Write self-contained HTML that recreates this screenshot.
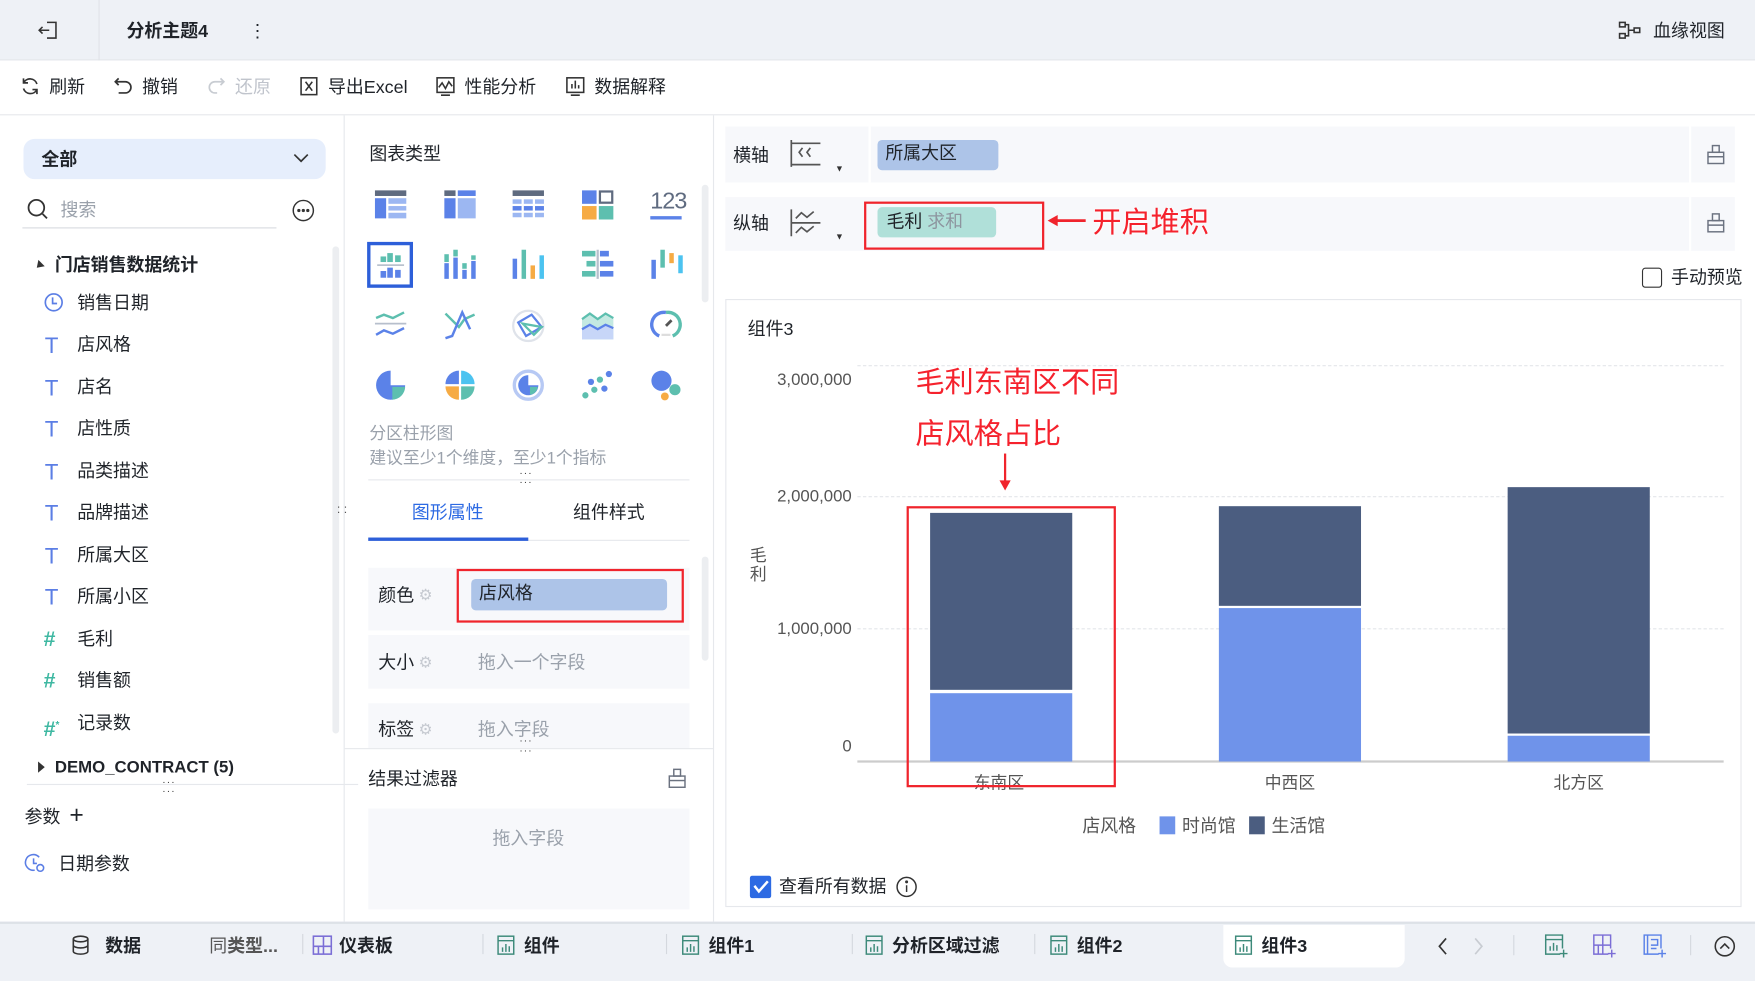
<!DOCTYPE html>
<html><head><meta charset="utf-8">
<style>
*{margin:0;padding:0;box-sizing:border-box}
html,body{width:1755px;height:981px;overflow:hidden;background:#fff}
body{font-family:"Liberation Sans","Noto Sans CJK SC",sans-serif;color:#1f2329}
#w{position:absolute;left:0;top:0;width:1568px;height:876px;transform:scale(1.11926,1.11986);transform-origin:0 0;background:#fff}
.a{position:absolute;white-space:nowrap}
.t{font-size:16px;line-height:24px}
.g{color:#9aa1ab}
.b{font-weight:bold}
.red{color:#f5222d}
svg{position:absolute;overflow:visible}
</style></head><body><div id="w">

<!-- top bar -->
<div class="a" style="left:0;top:0;width:1568px;height:54px;background:#eef1f6;border-bottom:1px solid #e3e6eb"></div>
<div class="a" style="left:88px;top:0;width:1px;height:54px;background:#e0e3e8"></div>
<svg style="left:34px;top:18px" width="18" height="18" viewBox="0 0 18 18" fill="none" stroke="#333" stroke-width="1.4"><path d="M8 2h8v14H8M1 9h9M4 6l-3 3 3 3"/></svg>
<div class="a t b" style="left:113px;top:17px">分析主题4</div>
<div class="a t" style="left:222px;top:17px">⋮</div>
<svg style="left:1446px;top:19px" width="20" height="16" viewBox="0 0 20 16" fill="none" stroke="#333" stroke-width="1.4"><rect x="1" y="1" width="5" height="4"/><rect x="1" y="11" width="5" height="4"/><rect x="14" y="6" width="5" height="4"/><path d="M6 3h3v10H6M9 8h5"/></svg>
<div class="a t" style="left:1477px;top:17px">血缘视图</div>

<!-- toolbar -->
<div class="a" style="left:0;top:102px;width:1568px;height:1px;background:#e6e8ec"></div>
<svg style="left:18px;top:68px" width="18" height="18" viewBox="0 0 18 18" fill="none" stroke="#333" stroke-width="1.5"><path d="M15 7A6.5 6.5 0 0 0 3 6M3 11a6.5 6.5 0 0 0 12 1M3 2v4h4M15 16v-4h-4"/></svg>
<div class="a t" style="left:44px;top:67px">刷新</div>
<svg style="left:101px;top:68px" width="18" height="18" viewBox="0 0 18 18" fill="none" stroke="#333" stroke-width="1.5"><path d="M5 2L2 5l3 3M2 5h9a5 5 0 0 1 0 10H5"/></svg>
<div class="a t" style="left:127px;top:67px">撤销</div>
<svg style="left:184px;top:68px" width="18" height="18" viewBox="0 0 18 18" fill="none" stroke="#c8ccd2" stroke-width="1.5"><path d="M13 2l3 3-3 3M16 5H8a5 5 0 0 0 0 10h2"/></svg>
<div class="a t" style="left:210px;top:67px;color:#c0c4cc">还原</div>
<svg style="left:267px;top:68px" width="18" height="18" viewBox="0 0 18 18" fill="none" stroke="#333" stroke-width="1.4"><rect x="2" y="1.5" width="14" height="15"/><path d="M6 5l6 8M12 5l-6 8"/></svg>
<div class="a t" style="left:293px;top:67px">导出Excel</div>
<svg style="left:389px;top:68px" width="18" height="18" viewBox="0 0 18 18" fill="none" stroke="#333" stroke-width="1.4"><rect x="1.5" y="1.5" width="15" height="13"/><path d="M3 10l3-4 3 5 3-6 3 4M5 17h8"/></svg>
<div class="a t" style="left:415px;top:67px">性能分析</div>
<svg style="left:505px;top:68px" width="18" height="18" viewBox="0 0 18 18" fill="none" stroke="#333" stroke-width="1.4"><rect x="1.5" y="1.5" width="15" height="13"/><path d="M6 11V7M9 11V4M12 11V8M5 17h8"/></svg>
<div class="a t" style="left:531px;top:67px">数据解释</div>

<!-- left panel -->
<div class="a" style="left:307px;top:103px;width:1px;height:720px;background:#e6e8ec"></div>
<div class="a" style="left:21px;top:124px;width:270px;height:36px;background:#e6eefc;border-radius:10px"></div>
<div class="a t b" style="left:37px;top:132px">全部</div>
<svg style="left:262px;top:137px" width="14" height="9" viewBox="0 0 14 9" fill="none" stroke="#333" stroke-width="1.5"><path d="M1 1l6 6 6-6"/></svg>
<svg style="left:24px;top:177px" width="20" height="20" viewBox="0 0 20 20" fill="none" stroke="#333" stroke-width="1.6"><circle cx="8.5" cy="8.5" r="7"/><path d="M14 14l4 4"/></svg>
<div class="a t g" style="left:54px;top:177px">搜索</div>
<div class="a" style="left:20px;top:203px;width:227px;height:1px;background:#d8dbe0"></div>
<svg style="left:261px;top:178px" width="20" height="20" viewBox="0 0 20 20" fill="none" stroke="#333" stroke-width="1.3"><circle cx="10" cy="10" r="9"/><circle cx="6" cy="10" r=".8" fill="#333"/><circle cx="10" cy="10" r=".8" fill="#333"/><circle cx="14" cy="10" r=".8" fill="#333"/></svg>
<div class="a" style="left:297px;top:220px;width:6px;height:435px;background:#eceef1;border-radius:3px"></div>
<div class="a" style="left:32px;top:233px;width:0;height:0;border-top:4px solid transparent;border-bottom:4px solid transparent;border-right:6px solid #333;transform:rotate(-45deg)"></div>
<div class="a t b" style="left:49px;top:226px">门店销售数据统计</div>

<svg style="left:39px;top:261px" width="18" height="18" viewBox="0 0 18 18" fill="none" stroke="#5b7ee5" stroke-width="1.5"><circle cx="9" cy="9" r="7.5"/><path d="M8 4.5V10h4"/></svg>
<div class="a t" style="left:69px;top:260px">销售日期</div>
<div class="a t" style="left:40px;top:297px;color:#5b7ee5;font-size:20px">T</div><div class="a t" style="left:69px;top:297px">店风格</div>
<div class="a t" style="left:40px;top:335px;color:#5b7ee5;font-size:20px">T</div><div class="a t" style="left:69px;top:335px">店名</div>
<div class="a t" style="left:40px;top:372px;color:#5b7ee5;font-size:20px">T</div><div class="a t" style="left:69px;top:372px">店性质</div>
<div class="a t" style="left:40px;top:410px;color:#5b7ee5;font-size:20px">T</div><div class="a t" style="left:69px;top:410px">品类描述</div>
<div class="a t" style="left:40px;top:447px;color:#5b7ee5;font-size:20px">T</div><div class="a t" style="left:69px;top:447px">品牌描述</div>
<div class="a t" style="left:40px;top:485px;color:#5b7ee5;font-size:20px">T</div><div class="a t" style="left:69px;top:485px">所属大区</div>
<div class="a t" style="left:40px;top:522px;color:#5b7ee5;font-size:20px">T</div><div class="a t" style="left:69px;top:522px">所属小区</div>
<div class="a t b" style="left:39px;top:560px;color:#3fb8a2;font-size:19px">#</div><div class="a t" style="left:69px;top:560px">毛利</div>
<div class="a t b" style="left:39px;top:597px;color:#3fb8a2;font-size:19px">#</div><div class="a t" style="left:69px;top:597px">销售额</div>
<div class="a t b" style="left:39px;top:635px;color:#3fb8a2;font-size:19px">#<sup style="font-size:9px">*</sup></div><div class="a t" style="left:69px;top:635px">记录数</div>
<div class="a" style="left:34px;top:680px;width:0;height:0;border-top:5px solid transparent;border-bottom:5px solid transparent;border-left:6px solid #333"></div>
<div class="a t b" style="left:49px;top:674px;font-size:15px">DEMO_CONTRACT (5)</div>
<div class="a" style="left:24px;top:700px;width:296px;height:1px;background:#e6e8ec"></div>
<div class="a" style="left:145px;top:693px;font-size:9px;color:#333;letter-spacing:1px">···</div>
<div class="a" style="left:145px;top:701px;font-size:9px;color:#333;letter-spacing:1px">···</div>
<div class="a t" style="left:22px;top:719px">参数</div>
<div class="a t" style="left:62px;top:716px;font-size:22px">+</div>
<svg style="left:23px;top:762px" width="18" height="18" viewBox="0 0 18 18" fill="none" stroke="#5b7ee5" stroke-width="1.4"><path d="M12 3.5A7 7 0 1 0 8 15"/><path d="M7 4.5V9h3"/><circle cx="13" cy="13" r="3"/></svg>
<div class="a t" style="left:52px;top:761px">日期参数</div>
<div class="a" style="left:301px;top:452px;font-size:11px;color:#555;line-height:6px">: :</div>

<!-- middle panel -->
<div class="a" style="left:637px;top:103px;width:1px;height:720px;background:#e6e8ec"></div>
<div class="a t" style="left:330px;top:127px">图表类型</div>
<div class="a" style="left:627px;top:165px;width:6px;height:105px;background:#eceef1;border-radius:3px"></div>
<!-- row1 -->
<svg style="left:335px;top:170px" width="28" height="26" viewBox="0 0 28 26"><rect x="0" y="0" width="28" height="5" fill="#5f6b80"/><rect x="0" y="7" width="10" height="18" fill="#5b82e8"/><rect x="12" y="7" width="16" height="5" fill="#9cb7f2"/><rect x="12" y="14" width="16" height="4" fill="#9cb7f2"/><rect x="12" y="20" width="16" height="5" fill="#9cb7f2"/></svg>
<svg style="left:397px;top:170px" width="28" height="26" viewBox="0 0 28 26"><rect x="0" y="0" width="10" height="5" fill="#5f6b80"/><rect x="12" y="0" width="16" height="5" fill="#5b82e8"/><rect x="0" y="7" width="10" height="18" fill="#5b82e8"/><rect x="12" y="7" width="16" height="18" fill="#9cb7f2"/></svg>
<svg style="left:458px;top:170px" width="28" height="26" viewBox="0 0 28 26"><rect x="0" y="0" width="28" height="5" fill="#5f6b80"/><g fill="#9cb7f2"><rect x="0" y="8" width="8" height="4"/><rect x="10" y="8" width="8" height="4"/><rect x="20" y="8" width="8" height="4"/><rect x="0" y="20" width="8" height="4"/><rect x="10" y="20" width="8" height="4"/><rect x="20" y="20" width="8" height="4"/></g><g fill="#5b82e8"><rect x="0" y="14" width="8" height="4"/><rect x="10" y="14" width="8" height="4"/><rect x="20" y="14" width="8" height="4"/></g></svg>
<svg style="left:520px;top:170px" width="28" height="26" viewBox="0 0 28 26"><rect x="0" y="0" width="13" height="12" fill="#5b82e8"/><rect x="16" y="1" width="11" height="10" fill="none" stroke="#5f6b80" stroke-width="2"/><rect x="0" y="14" width="13" height="12" fill="#f6ab44"/><rect x="15" y="14" width="13" height="12" fill="#5dbfaf"/></svg>
<div class="a" style="left:581px;top:169px;font-size:21px;color:#5f6b80;line-height:22px;letter-spacing:-1px">123</div>
<div class="a" style="left:581px;top:193px;width:28px;height:3px;background:#5b82e8"></div>
<!-- row2 -->
<div class="a" style="left:328px;top:216px;width:41px;height:41px;border:3px solid #2d5fd9"></div>
<svg style="left:337px;top:225px" width="24" height="24" viewBox="0 0 24 24"><g fill="#5dbfaf"><rect x="3" y="4" width="5" height="5"/><rect x="9" y="1" width="5" height="8"/><rect x="16" y="3" width="5" height="6"/></g><rect x="0" y="11" width="24" height="1.5" fill="#b7bfcc"/><g fill="#5b82e8"><rect x="3" y="17" width="5" height="6"/><rect x="9" y="14" width="5" height="9"/><rect x="16" y="16" width="5" height="7"/></g></svg>
<svg style="left:397px;top:223px" width="28" height="26" viewBox="0 0 28 26"><g fill="#5b82e8"><rect x="0" y="12" width="4" height="14"/><rect x="8" y="7" width="4" height="19"/><rect x="16" y="18" width="4" height="8"/><rect x="24" y="10" width="4" height="16"/></g><g fill="#5dbfaf"><rect x="0" y="4" width="4" height="7"/><rect x="8" y="0" width="4" height="6"/><rect x="16" y="12" width="4" height="5"/><rect x="24" y="5" width="4" height="4"/></g></svg>
<svg style="left:458px;top:223px" width="28" height="26" viewBox="0 0 28 26"><rect x="0" y="8" width="4" height="18" fill="#5b82e8"/><rect x="8" y="0" width="4" height="26" fill="#5dbfaf"/><rect x="16" y="14" width="4" height="12" fill="#f6ab44"/><rect x="24" y="5" width="4" height="21" fill="#4cc3f0"/></svg>
<svg style="left:520px;top:223px" width="28" height="26" viewBox="0 0 28 26"><rect x="13" y="0" width="2" height="26" fill="#b7bfcc"/><g fill="#5dbfaf"><rect x="0" y="1" width="12" height="5"/><rect x="4" y="10" width="8" height="5"/><rect x="0" y="19" width="12" height="5"/></g><g fill="#5b82e8"><rect x="16" y="1" width="8" height="5"/><rect x="16" y="10" width="12" height="5"/><rect x="16" y="19" width="12" height="5"/></g></svg>
<svg style="left:582px;top:223px" width="28" height="26" viewBox="0 0 28 26"><rect x="0" y="9" width="4" height="17" fill="#5b82e8"/><rect x="8" y="0" width="4" height="16" fill="#5dbfaf"/><rect x="16" y="3" width="4" height="9" fill="#f6ab44"/><rect x="24" y="5" width="4" height="16" fill="#4cc3f0"/></svg>
<!-- row3 -->
<svg style="left:335px;top:277px" width="28" height="26" viewBox="0 0 28 26" fill="none" stroke-width="2.2"><path d="M1 7l7-3 8 3 10-5" stroke="#5dbfaf"/><path d="M0 12h28" stroke="#b7bfcc" stroke-width="1.5"/><path d="M1 22l7-4 8 3 10-5" stroke="#5b82e8"/></svg>
<svg style="left:397px;top:277px" width="28" height="26" viewBox="0 0 28 26" fill="none" stroke-width="2.2"><path d="M1 3l12 12 5-7 9-4" stroke="#5dbfaf"/><path d="M1 25l6-2 9-21 7 15" stroke="#5b82e8"/></svg>
<svg style="left:457px;top:276px" width="30" height="30" viewBox="0 0 30 30" fill="none"><circle cx="15" cy="15" r="13.5" stroke="#dfe3ea" stroke-width="2"/><path d="M6 12l12-7 9 11-14 8z" stroke="#5b82e8" stroke-width="2"/><path d="M10 13l17 3-7 7z" stroke="#5dbfaf" stroke-width="2"/></svg>
<svg style="left:520px;top:277px" width="28" height="26" viewBox="0 0 28 26"><path d="M0 8l7-5 7 5 7-5 7 4v19H0z" fill="#c4e9e2"/><path d="M0 8l7-5 7 5 7-5 7 4" stroke="#5dbfaf" stroke-width="2" fill="none"/><path d="M0 17l7-4 7 4 7-4 7 3v10H0z" fill="#c7d6f8"/><path d="M0 17l7-4 7 4 7-4 7 3" stroke="#5b82e8" stroke-width="2" fill="none"/></svg>
<svg style="left:581px;top:276px" width="28" height="28" viewBox="0 0 28 28" fill="none" stroke-width="3"><path d="M8 24A11 11 0 0 1 14 3" stroke="#5b82e8"/><path d="M14 3A11 11 0 0 1 20 24" stroke="#5dbfaf"/><path d="M14 15l5-5" stroke="#555" stroke-width="2.5"/><path d="M10 23h8" stroke="#ddd" stroke-width="2"/></svg>
<!-- row4 -->
<svg style="left:335px;top:330px" width="28" height="28" viewBox="0 0 28 28"><path d="M14 14V1A13 13 0 1 0 27 14z" fill="#5b82e8"/><path d="M15.5 15.5h11.5A12 12 0 0 1 15.5 27z" fill="#5dbfaf"/></svg>
<svg style="left:397px;top:330px" width="28" height="28" viewBox="0 0 28 28"><path d="M13 13V1A12 12 0 0 0 1 13z" fill="#5b82e8"/><path d="M15 13V1A12 12 0 0 1 27 13z" fill="#4cc3f0"/><path d="M13 15H1A12 12 0 0 0 13 27z" fill="#f6ab44"/><path d="M15 15h12A12 12 0 0 1 15 27z" fill="#5dbfaf"/></svg>
<svg style="left:458px;top:330px" width="28" height="28" viewBox="0 0 28 28" fill="none"><circle cx="14" cy="14" r="12.5" stroke="#b7c9f4" stroke-width="3"/><path d="M14 14V5a9 9 0 1 0 9 9z" fill="#5b82e8"/><path d="M15.5 15.5h7a8 8 0 0 1-7 7z" fill="#5dbfaf"/></svg>
<svg style="left:520px;top:331px" width="28" height="26" viewBox="0 0 28 26"><g fill="#5b82e8"><circle cx="24" cy="3" r="2.8"/><circle cx="8" cy="10" r="2.8"/><circle cx="20" cy="16" r="2.8"/></g><g fill="#5dbfaf"><circle cx="16" cy="8" r="2.8"/><circle cx="11" cy="17" r="2.8"/><circle cx="3" cy="22" r="2.8"/></g></svg>
<svg style="left:581px;top:330px" width="28" height="28" viewBox="0 0 28 28"><circle cx="10" cy="10" r="9" fill="#5b82e8"/><circle cx="22" cy="18" r="5" fill="#5dbfaf"/><circle cx="13" cy="24" r="3.5" fill="#f6ab44"/></svg>
<div class="a t g" style="left:330px;top:376px;font-size:15px">分区柱形图</div>
<div class="a t g" style="left:330px;top:398px;font-size:15px">建议至少1个维度，至少1个指标</div>
<div class="a" style="left:329px;top:428px;width:287px;height:1px;background:#e6e8ec"></div>
<div class="a" style="left:464px;top:417px;font-size:9px;color:#333;letter-spacing:1px">···</div>
<div class="a" style="left:464px;top:425px;font-size:9px;color:#333;letter-spacing:1px">···</div>
<div class="a t" style="left:368px;top:447px;color:#2d6ae3">图形属性</div>
<div class="a t" style="left:512px;top:447px">组件样式</div>
<div class="a" style="left:329px;top:482px;width:287px;height:1px;background:#e6e8ec"></div>
<div class="a" style="left:329px;top:480px;width:143px;height:3px;background:#2d5fd9"></div>
<div class="a" style="left:627px;top:497px;width:6px;height:93px;background:#eceef1;border-radius:3px"></div>
<div class="a" style="left:329px;top:507px;width:287px;height:56px;background:#f7f8fb"></div>
<div class="a t" style="left:338px;top:521px">颜色</div><div class="a" style="left:374px;top:523px;color:#c5c9d0;font-size:14px">⚙</div>
<div class="a" style="left:421px;top:517px;width:175px;height:28px;background:#adc4e8;border-radius:4px"></div>
<div class="a t" style="left:428px;top:519px">店风格</div>
<div class="a" style="left:408px;top:508px;width:203px;height:48px;border:2px solid #f0242c"></div>
<div class="a" style="left:329px;top:567px;width:287px;height:48px;background:#f7f8fb"></div>
<div class="a t" style="left:338px;top:581px">大小</div><div class="a" style="left:374px;top:583px;color:#c5c9d0;font-size:14px">⚙</div>
<div class="a t g" style="left:427px;top:581px">拖入一个字段</div>
<div class="a" style="left:329px;top:628px;width:287px;height:40px;background:#f7f8fb"></div>
<div class="a t" style="left:338px;top:641px">标签</div><div class="a" style="left:374px;top:643px;color:#c5c9d0;font-size:14px">⚙</div>
<div class="a t g" style="left:427px;top:641px">拖入字段</div>
<div class="a" style="left:308px;top:668px;width:329px;height:1px;background:#e6e8ec"></div>
<div class="a" style="left:464px;top:656px;font-size:9px;color:#333;letter-spacing:1px">···</div>
<div class="a" style="left:464px;top:665px;font-size:9px;color:#333;letter-spacing:1px">···</div>
<div class="a t" style="left:329px;top:685px">结果过滤器</div>
<svg style="left:597px;top:686px" width="16" height="18" viewBox="0 0 16 18" fill="none" stroke="#6b7280" stroke-width="1.3"><rect x="1" y="7" width="14" height="10"/><rect x="5" y="1" width="6" height="6"/><path d="M1 11h14"/></svg>
<div class="a" style="left:329px;top:722px;width:287px;height:90px;background:#f7f8fb"></div>
<div class="a t g" style="left:440px;top:738px">拖入字段</div>

<!-- right panel axes -->
<div class="a" style="left:648px;top:113px;width:902px;height:50px;background:#f7f8fb"></div>
<div class="a" style="left:776px;top:113px;width:2px;height:50px;background:#fff"></div>
<div class="a" style="left:1509px;top:113px;width:2px;height:50px;background:#fff"></div>
<div class="a t" style="left:655px;top:128px">横轴</div>
<svg style="left:705px;top:124px" width="28" height="26" viewBox="0 0 28 26" fill="none" stroke="#555" stroke-width="1.5"><path d="M2 1v24M2 4h26M2 23h26M12 8l-3 4 3 4M19 8l-3 4 3 4"/></svg>
<div class="a" style="left:746px;top:146px;font-size:8px;color:#333">▼</div>
<div class="a" style="left:784px;top:125px;width:108px;height:27px;background:#adc4e8;border-radius:4px"></div>
<div class="a t" style="left:791px;top:126px">所属大区</div>
<svg style="left:1525px;top:129px" width="16" height="18" viewBox="0 0 16 18" fill="none" stroke="#6b7280" stroke-width="1.3"><rect x="1" y="7" width="14" height="10"/><rect x="5" y="1" width="6" height="6"/><path d="M1 11h14"/></svg>

<div class="a" style="left:648px;top:176px;width:902px;height:48px;background:#f7f8fb"></div>
<div class="a" style="left:1509px;top:176px;width:2px;height:48px;background:#fff"></div>
<div class="a t" style="left:655px;top:189px">纵轴</div>
<svg style="left:705px;top:186px" width="28" height="26" viewBox="0 0 28 26" fill="none" stroke="#555" stroke-width="1.5"><path d="M2 1v24M2 13h26M6 9l5-5 5 4 6-5M6 22l5-5 5 4 6-5"/></svg>
<div class="a" style="left:746px;top:207px;font-size:8px;color:#333">▼</div>
<div class="a" style="left:784px;top:185px;width:106px;height:27px;background:#b0e0d9;border-radius:4px"></div>
<div class="a t" style="left:792px;top:187px">毛利 <span style="color:#8d959f">求和</span></div>
<div class="a" style="left:772px;top:180px;width:161px;height:43px;border:2px solid #f0242c"></div>
<svg style="left:934px;top:190px" width="38" height="14" viewBox="0 0 38 14"><path d="M36 7H8" stroke="#f0242c" stroke-width="2.5"/><path d="M2 7l9-5v10z" fill="#f0242c"/></svg>
<div class="a red" style="left:976px;top:183px;font-size:26px;line-height:30px;text-shadow:0 0 3px #fff,0 0 3px #fff">开启堆积</div>
<svg style="left:1525px;top:190px" width="16" height="18" viewBox="0 0 16 18" fill="none" stroke="#6b7280" stroke-width="1.3"><rect x="1" y="7" width="14" height="10"/><rect x="5" y="1" width="6" height="6"/><path d="M1 11h14"/></svg>
<div class="a" style="left:1467px;top:239px;width:18px;height:18px;border:1.3px solid #333;border-radius:3px"></div>
<div class="a t" style="left:1493px;top:237px">手动预览</div>

<!-- chart card -->
<div class="a" style="left:648px;top:267px;width:908px;height:543px;border:1px solid #e6e8ec"></div>
<div class="a t" style="left:668px;top:283px">组件3</div>
<div class="a" style="left:766px;top:326px;width:774px;border-top:1.5px dashed #e4e6ea"></div>
<div class="a" style="left:766px;top:443px;width:774px;border-top:1.5px dashed #e4e6ea"></div>
<div class="a" style="left:766px;top:561px;width:774px;border-top:1.5px dashed #e4e6ea"></div>
<div class="a" style="left:766px;top:679px;width:774px;height:2px;background:#ccc"></div>
<div class="a t" style="left:661px;top:328px;width:100px;text-align:right;color:#555;font-size:15px">3,000,000</div>
<div class="a t" style="left:661px;top:432px;width:100px;text-align:right;color:#555;font-size:15px">2,000,000</div>
<div class="a t" style="left:661px;top:550px;width:100px;text-align:right;color:#555;font-size:15px">1,000,000</div>
<div class="a t" style="left:661px;top:655px;width:100px;text-align:right;color:#555;font-size:15px">0</div>
<div class="a" style="left:670px;top:488px;font-size:15px;line-height:17px;color:#555;width:16px">毛<br>利</div>
<div class="a" style="left:831px;top:458px;width:127px;height:158px;background:#4b5d80"></div>
<div class="a" style="left:831px;top:619px;width:127px;height:61px;background:#6f93ea"></div>
<div class="a" style="left:1089px;top:452px;width:127px;height:89px;background:#4b5d80"></div>
<div class="a" style="left:1089px;top:543px;width:127px;height:137px;background:#6f93ea"></div>
<div class="a" style="left:1347px;top:435px;width:127px;height:220px;background:#4b5d80"></div>
<div class="a" style="left:1347px;top:657px;width:127px;height:23px;background:#6f93ea"></div>
<div class="a t" style="left:870px;top:688px;color:#555;font-size:15px">东南区</div>
<div class="a t" style="left:1130px;top:688px;color:#555;font-size:15px">中西区</div>
<div class="a t" style="left:1388px;top:688px;color:#555;font-size:15px">北方区</div>
<div class="a" style="left:810px;top:452px;width:187px;height:251px;border:2px solid #f0242c"></div>
<div class="a red" style="left:818px;top:326px;font-size:26px;line-height:30px">毛利东南区不同</div>
<div class="a red" style="left:818px;top:372px;font-size:26px;line-height:30px">店风格占比</div>
<svg style="left:892px;top:405px" width="12" height="34" viewBox="0 0 12 34"><path d="M6 0v26" stroke="#f0242c" stroke-width="2"/><path d="M1 24h10l-5 9z" fill="#f0242c"/></svg>
<div class="a t" style="left:967px;top:727px;color:#555">店风格</div>
<div class="a" style="left:1036px;top:729px;width:14px;height:16px;background:#6f93ea"></div>
<div class="a t" style="left:1056px;top:727px;color:#555">时尚馆</div>
<div class="a" style="left:1116px;top:729px;width:14px;height:16px;background:#4b5d80"></div>
<div class="a t" style="left:1136px;top:727px;color:#555">生活馆</div>
<div class="a" style="left:670px;top:782px;width:19px;height:20px;background:#2d6ae3;border-radius:2px"></div>
<svg style="left:673px;top:786px" width="14" height="12" viewBox="0 0 14 12" fill="none" stroke="#fff" stroke-width="2.2"><path d="M1 5l4 5 8-9"/></svg>
<div class="a t" style="left:696px;top:781px">查看所有数据</div>
<svg style="left:800px;top:782px" width="20" height="20" viewBox="0 0 20 20" fill="none" stroke="#333" stroke-width="1.3"><circle cx="10" cy="10" r="8.5"/><path d="M10 8.5v6"/><circle cx="10" cy="5.5" r=".7" fill="#333"/></svg>

<!-- bottom bar -->
<div class="a" style="left:0;top:823px;width:1568px;height:53px;background:#eef1f6;border-top:2px solid #dde1e7"></div>
<div class="a" style="left:1093px;top:826px;width:162px;height:38px;background:#fff;border-radius:0 0 8px 8px"></div>
<svg style="left:64px;top:835px" width="16" height="18" viewBox="0 0 16 18" fill="none" stroke="#333" stroke-width="1.4"><ellipse cx="8" cy="3.5" rx="6.5" ry="2.5"/><path d="M1.5 3.5v11c0 1.4 2.9 2.5 6.5 2.5s6.5-1.1 6.5-2.5v-11M1.5 9c0 1.4 2.9 2.5 6.5 2.5s6.5-1.1 6.5-2.5"/></svg>
<div class="a t b" style="left:94px;top:834px">数据</div>
<div class="a t b" style="left:187px;top:834px;color:#555"><span style="font-weight:normal">同</span>类型...</div>
<div class="a" style="left:270px;top:834px;width:1px;height:18px;background:#d4d8de"></div>
<svg style="left:279px;top:835px" width="18" height="18" viewBox="0 0 18 18" fill="none" stroke="#7b6ed6" stroke-width="1.4"><rect x="1" y="1" width="16" height="16"/><path d="M10 1v16M1 10h16M5.5 10v7"/></svg>
<div class="a t b" style="left:303px;top:834px">仪表板</div>
<div class="a" style="left:431px;top:834px;width:1px;height:18px;background:#d4d8de"></div>
<svg style="left:444px;top:835px" width="16" height="18" viewBox="0 0 16 18" fill="none" stroke="#3d8a7a" stroke-width="1.3"><rect x="1" y="1" width="14" height="16"/><path d="M1 5h14M5 15v-4M8 15V8M11 15v-5"/></svg>
<div class="a t b" style="left:468px;top:834px">组件</div>
<div class="a" style="left:595px;top:834px;width:1px;height:18px;background:#d4d8de"></div>
<svg style="left:609px;top:835px" width="16" height="18" viewBox="0 0 16 18" fill="none" stroke="#3d8a7a" stroke-width="1.3"><rect x="1" y="1" width="14" height="16"/><path d="M1 5h14M5 15v-4M8 15V8M11 15v-5"/></svg>
<div class="a t b" style="left:633px;top:834px">组件1</div>
<div class="a" style="left:761px;top:834px;width:1px;height:18px;background:#d4d8de"></div>
<svg style="left:773px;top:835px" width="16" height="18" viewBox="0 0 16 18" fill="none" stroke="#3d8a7a" stroke-width="1.3"><rect x="1" y="1" width="14" height="16"/><path d="M1 5h14M5 15v-4M8 15V8M11 15v-5"/></svg>
<div class="a t b" style="left:797px;top:834px">分析区域过滤</div>
<div class="a" style="left:924px;top:834px;width:1px;height:18px;background:#d4d8de"></div>
<svg style="left:938px;top:835px" width="16" height="18" viewBox="0 0 16 18" fill="none" stroke="#3d8a7a" stroke-width="1.3"><rect x="1" y="1" width="14" height="16"/><path d="M1 5h14M5 15v-4M8 15V8M11 15v-5"/></svg>
<div class="a t b" style="left:962px;top:834px">组件2</div>
<svg style="left:1103px;top:835px" width="16" height="18" viewBox="0 0 16 18" fill="none" stroke="#3d8a7a" stroke-width="1.3"><rect x="1" y="1" width="14" height="16"/><path d="M1 5h14M5 15v-4M8 15V8M11 15v-5"/></svg>
<div class="a t b" style="left:1127px;top:834px">组件3</div>
<svg style="left:1284px;top:837px" width="10" height="16" viewBox="0 0 10 16" fill="none" stroke="#333" stroke-width="1.5"><path d="M8 1L2 8l6 7"/></svg>
<svg style="left:1316px;top:837px" width="10" height="16" viewBox="0 0 10 16" fill="none" stroke="#c8ccd2" stroke-width="1.5"><path d="M2 1l6 7-6 7"/></svg>
<div class="a" style="left:1352px;top:835px;width:1px;height:18px;background:#d4d8de"></div>
<svg style="left:1380px;top:834px" width="22" height="22" viewBox="0 0 22 22" fill="none" stroke="#3d8a7a" stroke-width="1.3"><path d="M14 18H1V1h15v12M1 5h15M5 15v-4M8 15V8M11 15v-5M17 14v7M13.5 17.5h7"/></svg>
<svg style="left:1423px;top:834px" width="22" height="22" viewBox="0 0 22 22" fill="none" stroke="#7b6ed6" stroke-width="1.3"><path d="M14 18H1V1h15v12M9 1v17M1 10h15M5 10v8M17 14v7M13.5 17.5h7"/></svg>
<svg style="left:1468px;top:834px" width="22" height="22" viewBox="0 0 22 22" fill="none" stroke="#5b82e8" stroke-width="1.3"><path d="M14 18H1V1h15v12M4 1v17M7 5h6v5H7M7 13h5M17 14v7M13.5 17.5h7"/></svg>
<div class="a" style="left:1510px;top:835px;width:1px;height:18px;background:#d4d8de"></div>
<svg style="left:1531px;top:835px" width="20" height="20" viewBox="0 0 20 20" fill="none" stroke="#333" stroke-width="1.4"><circle cx="10" cy="10" r="8.5"/><path d="M6 12l4-4 4 4"/></svg>

</div></body></html>
